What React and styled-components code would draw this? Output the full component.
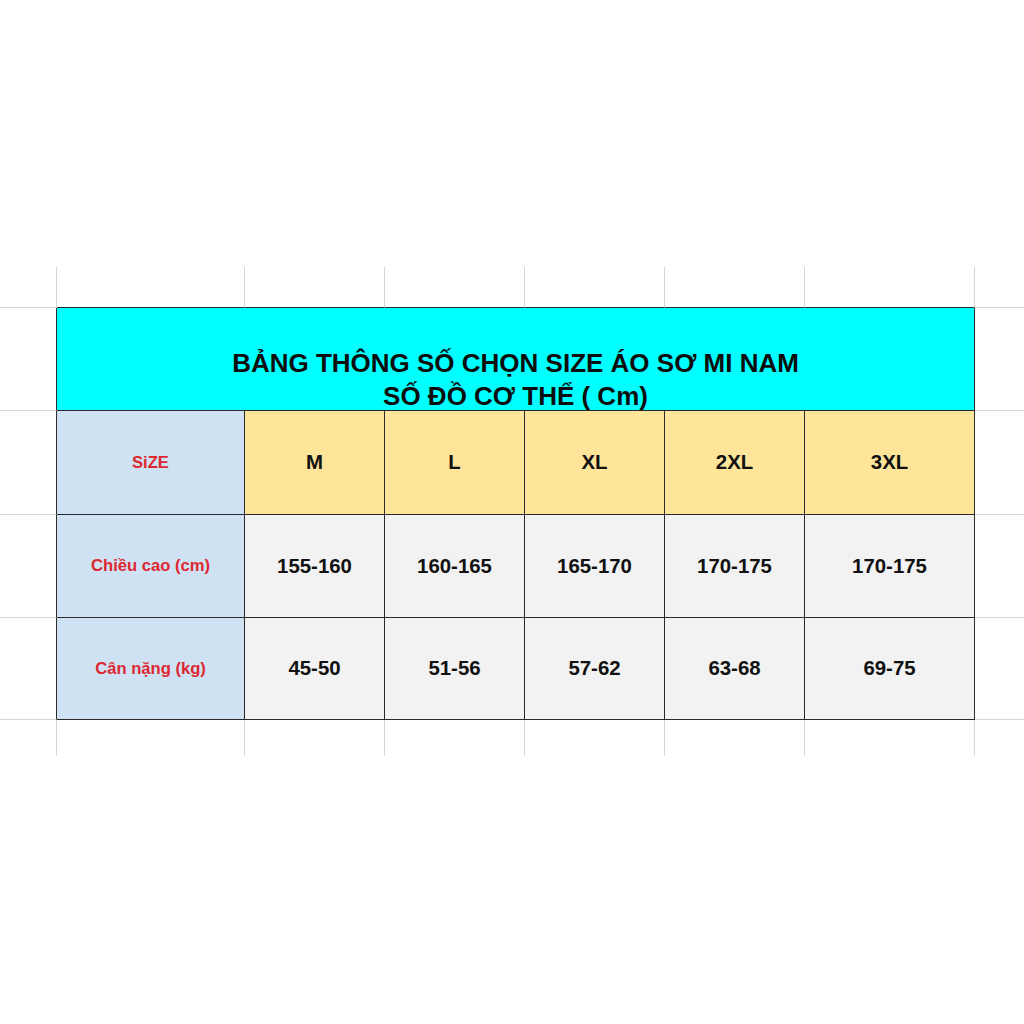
import React from 'react';
import styled, { createGlobalStyle } from 'styled-components';

const sizes = ['M', 'L', 'XL', '2XL', '3XL'];

const rows = [
  { label: 'Chiều cao (cm)', values: ['155-160', '160-165', '165-170', '170-175', '170-175'] },
  { label: 'Cân nặng (kg)', values: ['45-50', '51-56', '57-62', '63-68', '69-75'] },
];

const LINE = {
  light: '1px solid #d6d6d6',
  dark: '1px solid #2a2a2a',
  none: '0',
};

const GlobalStyle = createGlobalStyle`
  html, body {
    margin: 0;
    padding: 0;
    background: #ffffff;
  }
  body {
    font-family: 'Liberation Sans', Arial, sans-serif;
  }
`;

const Page = styled.div`
  width: 1024px;
  height: 1024px;
  padding-top: 267px;
  box-sizing: border-box;
  background: #ffffff;
`;

const Sheet = styled.div`
  display: grid;
  grid-template-columns: 57px 188px 140px 140px 140px 140px 170px 1fr;
  grid-template-rows: 41px 103px 104px 103px 102px 36px;
`;

const Cell = styled.div`
  box-sizing: border-box;
  display: flex;
  align-items: center;
  justify-content: center;
  background: ${(p) => p.$fill || 'transparent'};
  border-right: ${(p) => LINE[p.$right || 'none']};
  border-bottom: ${(p) => LINE[p.$bottom || 'none']};
  font-family: 'Liberation Sans', Arial, sans-serif;
  font-weight: 700;
  font-size: ${(p) => (p.$label ? '16.6px' : '20.4px')};
  color: ${(p) => (p.$label ? '#dd2832' : '#111111')};
  white-space: nowrap;
`;

const TitleCell = styled(Cell)`
  grid-column: span 6;
  align-items: flex-end;
  background: #00ffff;
`;

// Excel-style bottom aligned text, it sits a touch lower than the box
const TitleText = styled.div`
  display: flex;
  flex-direction: column;
  align-items: center;
  width: 100%;
  margin-bottom: -3px;
  font-size: 26px;
  line-height: 33px;
  color: #0d0d0d;
`;

const App = () => {
  // vertical lines of the blank rows above and below the table
  const blankRow = (key, bottomFor) =>
    Array.from({ length: 8 }, (_, i) => (
      <Cell
        key={`${key}-${i}`}
        $right={i < 7 ? 'light' : 'none'}
        $bottom={bottomFor(i)}
      />
    ));

  return (
    <>
      <GlobalStyle />
      <Page>
        <Sheet>
          {blankRow('top', (i) => (i === 0 || i === 7 ? 'light' : 'dark'))}

          <Cell $right="dark" $bottom="light" />
          <TitleCell $right="dark" $bottom="dark">
            <TitleText>
              <span>BẢNG THÔNG SỐ CHỌN SIZE ÁO SƠ MI NAM</span>
              <span>SỐ ĐỒ CƠ THỂ ( Cm)</span>
            </TitleText>
          </TitleCell>
          <Cell $bottom="light" />

          <Cell $right="dark" $bottom="light" />
          <Cell $fill="#cfe2f3" $right="dark" $bottom="dark" $label>
            SiZE
          </Cell>
          {sizes.map((s) => (
            <Cell key={s} $fill="#ffe599" $right="dark" $bottom="dark">
              {s}
            </Cell>
          ))}
          <Cell $bottom="light" />

          {rows.map((row) => (
            <React.Fragment key={row.label}>
              <Cell $right="dark" $bottom="light" />
              <Cell $fill="#cfe2f3" $right="dark" $bottom="dark" $label>
                {row.label}
              </Cell>
              {row.values.map((v, i) => (
                <Cell key={i} $fill="#f2f2f2" $right="dark" $bottom="dark">
                  {v}
                </Cell>
              ))}
              <Cell $bottom="light" />
            </React.Fragment>
          ))}

          {blankRow('bottom', () => 'none')}
        </Sheet>
      </Page>
    </>
  );
};

export default App;
